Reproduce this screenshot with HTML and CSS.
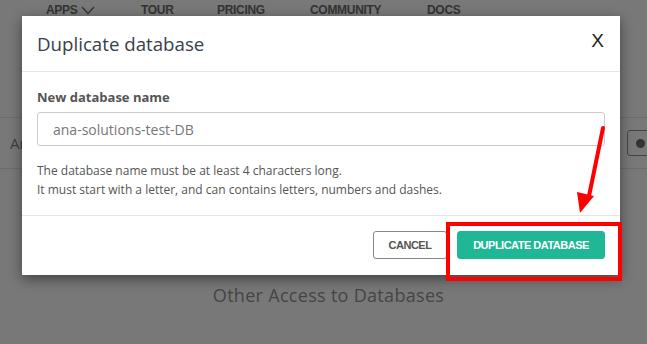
FILE: index.html
```html
<!DOCTYPE html>
<html lang="en">
<head>
    <meta charset="UTF-8">
    <meta name="viewport" content="width=device-width, initial-scale=1.0">
    <title>Duplicate database</title>
    <link rel="stylesheet" href="styles.css">
</head>
<body>
    <div class="page">
        <nav class="topnav">
            <a class="nav-apps">APPS
                <svg width="14" height="9" viewBox="0 0 14 9"><path d="M1 1 L7 7.5 L13 1" fill="none" stroke="#333" stroke-width="1.3"/></svg>
            </a>
            <a class="nav-tour">TOUR</a>
            <a class="nav-pricing">PRICING</a>
            <a class="nav-community">COMMUNITY</a>
            <a>DOCS</a>
        </nav>
        <div class="toolbar">
            <span class="toolbar-title">Ana</span>
            <span class="toolbar-btn"><span class="dot"></span></span>
        </div>
        <h2 class="section-title">Other Access to Databases</h2>
    </div>

    <div class="modal">
        <div class="modal-header">
            <h3>Duplicate database</h3>
            <span class="close">X</span>
        </div>
        <div class="modal-body">
            <label class="field-label" for="dbName">New database name</label>
            <input type="text" id="dbName" class="field-input" placeholder="ana-solutions-test-DB">
            <p class="help">The database name must be at least 4 characters long.<br>
                It must start with a letter, and can contains letters, numbers and dashes.</p>
        </div>
        <div class="modal-footer">
            <button type="button" class="btn btn-cancel">CANCEL</button>
            <button type="button" class="btn btn-primary">DUPLICATE DATABASE</button>
        </div>
    </div>

    <!-- annotation -->
    <div class="highlight"></div>
    <svg class="arrow" width="40" height="100" viewBox="0 0 40 100">
        <line x1="33" y1="4" x2="19" y2="72" stroke="#ff0000" stroke-width="4" stroke-linecap="round"/>
        <polygon points="7,68 24,72 10,89" fill="#ff0000"/>
    </svg>
</body>
</html>
```

FILE: styles.css
```css
body {
    margin: 0;
    width: 647px;
    height: 344px;
    overflow: hidden;
    background: #787878;
    font-family: "Open Sans", Arial, sans-serif;
}

.page {
    position: relative;
    height: 344px;
}

.topnav {
    display: flex;
    align-items: center;
    height: 20px;
    padding-left: 46px;
    font-family: "Liberation Sans", Arial, sans-serif;
    font-weight: bold;
    font-size: 12px;
    letter-spacing: -0.3px;
    color: #333;
}

.topnav a {
    display: flex;
    align-items: center;
    gap: 4px;
}

.nav-apps { width: 95px; }
.nav-tour { width: 76px; }
.nav-pricing { width: 93px; }
.nav-community { width: 117px; }

.toolbar {
    margin-top: 97px;
    height: 50px;
    border-top: 1px solid #6c6c6c;
    border-bottom: 1px solid #6c6c6c;
    display: flex;
    align-items: center;
    justify-content: space-between;
    padding-left: 10px;
}

.toolbar-title {
    font-size: 15px;
    color: #35404d;
}

.toolbar-btn {
    width: 40px;
    height: 26px;
    margin-right: -20px;
    border: 1px solid #444;
    border-radius: 3px;
    display: flex;
    align-items: center;
    padding-left: 8px;
    box-sizing: border-box;
}

.dot {
    width: 9px;
    height: 9px;
    border-radius: 50%;
    background: #333;
}

.section-title {
    margin: 114px 0 0;
    padding-left: 10px;
    text-align: center;
    font-size: 18px;
    font-weight: normal;
    letter-spacing: 0.3px;
    color: #454545;
}

.modal {
    position: absolute;
    left: 22px;
    top: 16px;
    width: 598px;
    background: #fff;
    box-shadow: 0 4px 12px rgba(0, 0, 0, 0.45);
}

.modal-header {
    height: 55px;
    border-bottom: 1px solid #e5e5e5;
    display: flex;
    align-items: center;
    justify-content: space-between;
    padding: 0 15px;
}

.modal-header h3 {
    margin: 0;
    font-size: 18.7px;
    font-weight: normal;
    color: #36414c;
}

.close {
    font-family: "Liberation Sans", Arial, sans-serif;
    font-size: 19px;
    color: #222;
    margin-right: 1px;
    margin-top: -6px;
}

.modal-body {
    padding: 15px 15px 16px;
    border-bottom: 1px solid #e5e5e5;
}

.field-label {
    display: block;
    font-size: 13px;
    font-weight: bold;
    line-height: 20px;
    color: #555;
    margin-bottom: 5px;
}

.field-input {
    display: block;
    box-sizing: border-box;
    width: 568px;
    height: 34px;
    padding: 0 15px;
    border: 1px solid #ccc;
    border-radius: 3px;
    font-family: "Open Sans", Arial, sans-serif;
    font-size: 14px;
    outline: none;
}

.field-input::placeholder {
    color: #777;
}

.help {
    margin: 15px 0 0;
    font-size: 12px;
    line-height: 19px;
    color: #555;
}

.modal-footer {
    display: flex;
    justify-content: flex-end;
    gap: 10px;
    padding: 15px 15px 16px;
}

.btn {
    box-sizing: border-box;
    height: 28px;
    border-radius: 3px;
    font-family: "Liberation Sans", Arial, sans-serif;
    font-weight: bold;
    font-size: 11px;
    letter-spacing: -0.5px;
    white-space: nowrap;
    padding: 0;
    cursor: pointer;
}

.btn-cancel {
    width: 74px;
    background: #fff;
    border: 1px solid #888;
    color: #555;
}

.btn-primary {
    width: 148px;
    background: #20b796;
    border: 1px solid #20b796;
    color: #fff;
}

.highlight {
    position: absolute;
    left: 446px;
    top: 222px;
    width: 168px;
    height: 51px;
    border: 4px solid #ff0000;
}

.arrow {
    position: absolute;
    left: 570px;
    top: 124px;
}
```
